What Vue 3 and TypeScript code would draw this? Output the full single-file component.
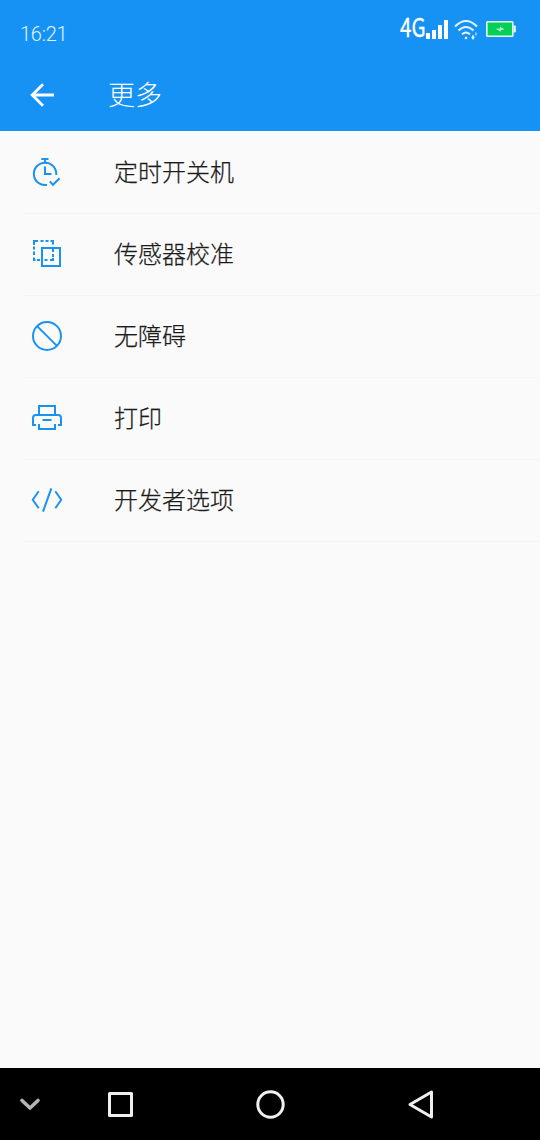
<script setup lang="ts">
type IconName = 'timer' | 'sensor' | 'blocked' | 'printer' | 'code'

interface MenuItem {
  label: string
  icon: IconName
}

const items: MenuItem[] = [
  { label: '定时开关机', icon: 'timer' },
  { label: '传感器校准', icon: 'sensor' },
  { label: '无障碍', icon: 'blocked' },
  { label: '打印', icon: 'printer' },
  { label: '开发者选项', icon: 'code' },
]
</script>

<template>
  <div class="screen">
    <header class="top">
      <div class="status">
        <span class="clock">16:21</span>
        <div class="indicators">
          <span class="network">4G</span>
          <svg class="signal" width="22" height="19" viewBox="0 0 22 19" fill="#fff">
            <rect x="0" y="13" width="4" height="6" />
            <rect x="6" y="10" width="4" height="9" />
            <rect x="12" y="5" width="4" height="14" />
            <rect x="18" y="0" width="4" height="19" />
          </svg>
          <svg class="wifi" width="26" height="22" viewBox="0 0 26 22" fill="none" stroke="#e4f3ff" stroke-width="2">
            <path d="M2 7.500Q13-3.500 24 7.500" />
            <path d="M5.500 11.500Q13 4.500 20.500 11.500" />
            <path d="M9 15.300Q13 11.700 17 15.300" />
            <circle cx="13" cy="19" r="1.300" fill="#e4f3ff" stroke="none" />
            <path d="M20 15.500L21.700 18.500L20 21L18.300 18.500Z" fill="#e4f3ff" stroke="none" />
            <path d="M23 17.500L24.200 15L23 12.500L21.800 15Z" fill="#8dcbfb" stroke="none" />
          </svg>
          <svg class="battery" width="30" height="16" viewBox="0 0 30 16">
            <rect x="0.800" y="0.800" width="26" height="14.400" rx="0.800" fill="#06cf55" stroke="#e8fff4" stroke-width="1.600" />
            <rect x="27.500" y="4.500" width="2.300" height="7" rx="0.800" fill="#e8fff4" />
            <path d="M9.500 7.800L14 7.600V5.600L18.500 8.600L14.800 9V10.800Z" fill="#b4fbd0" />
          </svg>
        </div>
      </div>
      <div class="title-bar">
        <svg class="back" width="26" height="26" viewBox="0 0 26 26" fill="none" stroke="#fff" stroke-width="2.800">
          <path d="M25 13H4M14 2.200L3.200 13L14 23.800" />
        </svg>
        <h1>更多</h1>
      </div>
    </header>

    <main class="list">
      <div v-for="item in items" :key="item.icon" class="row">
        <svg class="icon" width="36" height="36" viewBox="0 0 36 36">
          <g v-if="item.icon === 'timer'">
            <path d="M27.200 21A11.200 11.200 0 1 0 18 30.900" />
            <path d="M12.300 5h7.200M16 5v3.500M16 12.500V20h6.500" />
            <path d="M20.800 27.300l3.200 3.500 6.500-6.500" />
          </g>
          <g v-else-if="item.icon === 'sensor'">
            <path d="M5 9V5h4M11.500 5h3M16.500 5h3M21.500 5h2.500v3.500M24 11v5M24 18v3M24 22v2h-3M18.500 24h-3M11 24h-3M6.500 24H5v-2.500M5 19v-3.500M5 13.500v-3" />
            <rect x="13" y="12" width="18" height="18" />
          </g>
          <g v-else-if="item.icon === 'blocked'">
            <circle cx="18" cy="18" r="14" />
            <path d="M8.100 8.100l19.800 19.800" />
          </g>
          <g v-else-if="item.icon === 'printer'">
            <path d="M10 14.500V6h16v8.500" />
            <path d="M7 25H4v-7q0-3 3-3h22q3 0 3 3v7h-3" />
            <path d="M10 24v5h16v-5M13.500 20h9" />
          </g>
          <g v-else>
            <path d="M9.700 9.300L3.800 17.800l5.900 8.500M22.300 6.300L14 29.700M26.300 9.300l5.900 8.500-5.900 8.500" />
          </g>
        </svg>
        <span class="label">{{ item.label }}</span>
      </div>
    </main>

    <nav class="nav">
      <svg width="540" height="72" viewBox="0 0 540 72" fill="none" stroke="#efefef" stroke-width="3" stroke-linejoin="round" stroke-linecap="round">
        <path d="M22 32.500l8 7.500 8-7.500" stroke="#b5b5b5" stroke-width="3.600" />
        <rect x="109.500" y="25.500" width="22" height="22" />
        <circle cx="270.500" cy="36.500" r="12.700" />
        <path d="M431.500 24v25L410 36.500z" />
      </svg>
    </nav>
  </div>
</template>

<style>
body {
  margin: 0;
}
</style>

<style scoped>
.screen {
  display: flex;
  flex-direction: column;
  width: 540px;
  height: 1140px;
  background: #fafafa;
  font-family: Roboto, 'Noto Sans CJK SC', sans-serif;
  font-weight: 300;
  overflow: hidden;
}
.top {
  flex: none;
  height: 131px;
  background: #1692f5;
  color: #fff;
}
.status {
  display: flex;
  justify-content: space-between;
  height: 60px;
  padding: 0 24px 0 20px;
}
.clock {
  margin-top: 22px;
  font-size: 20px;
  line-height: 24px;
  letter-spacing: -0.25px;
  color: #e0f4ff;
}
.indicators {
  display: flex;
  align-items: flex-start;
}
.network {
  width: 26px;
  margin-top: 12px;
  font: 400 26px/28px 'Noto Sans CJK SC', sans-serif;
  -webkit-text-stroke: 0.3px #fff;
  transform: scaleX(0.79);
  transform-origin: left;
}
.signal {
  margin-top: 20px;
}
.wifi {
  margin: 19px 0 0 5px;
}
.battery {
  margin: 21px 0 0 7px;
}
.title-bar {
  display: flex;
  align-items: center;
  height: 70px;
  padding-left: 29px;
}
h1 {
  margin: 0 0 0 53px;
  padding-top: 2px;
  font-size: 27px;
  font-weight: 300;
  line-height: 40px;
}
.list {
  flex: 1;
}
.row {
  display: flex;
  align-items: center;
  box-sizing: border-box;
  height: 82px;
  margin-left: 24px;
  padding-left: 5px;
  box-shadow: 0 1px #f4f4f4;
}
.icon {
  flex: none;
  fill: none;
  stroke: #1a92f0;
  stroke-width: 2;
}
.label {
  margin-left: 49px;
  padding-top: 2px;
  font-size: 24px;
  line-height: 36px;
  color: #1c1c1c;
  -webkit-text-stroke: 0.25px #1c1c1c;
}
.nav {
  flex: none;
  height: 72px;
  background: #000;
}
.nav svg {
  display: block;
}
</style>
